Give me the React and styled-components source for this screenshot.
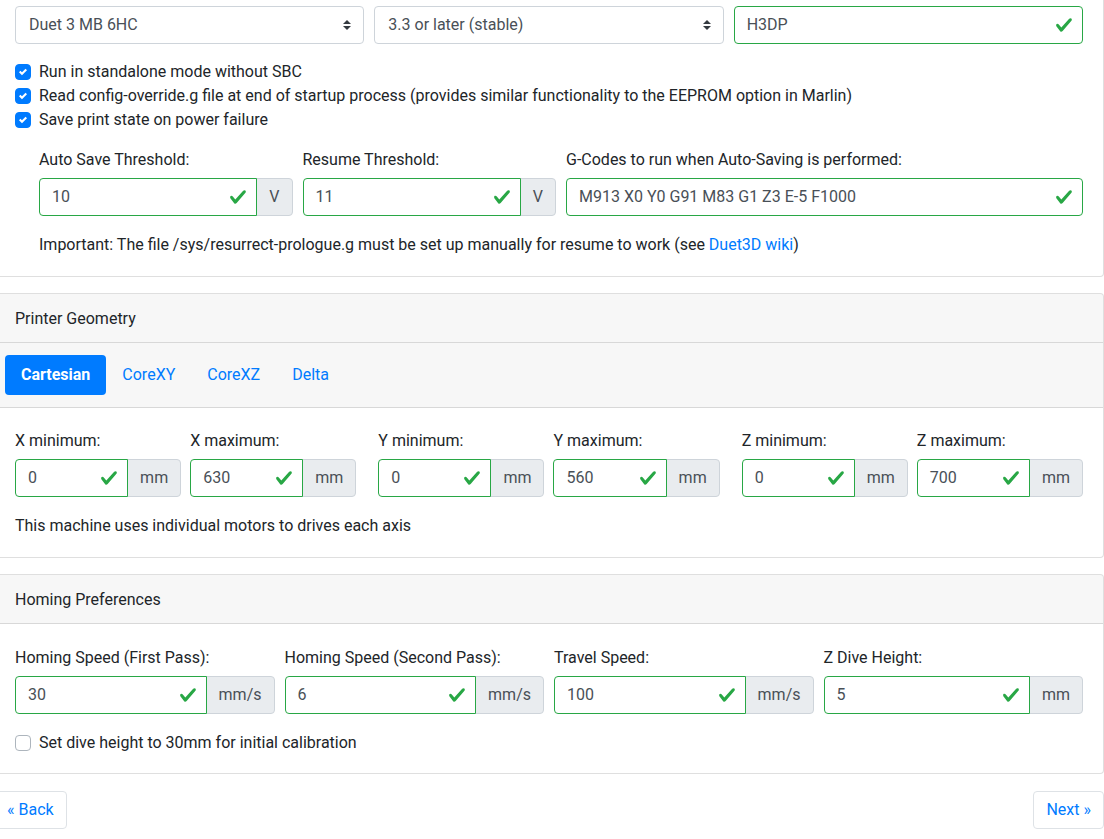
import React from "react";
import styled, { createGlobalStyle } from "styled-components";

const GlobalStyle = createGlobalStyle`
  html, body { margin: 0; padding: 0; background: #fff; }
  body {
    font-family: "Segoe UI", Roboto, "Noto Sans", sans-serif;
    font-size: 16px;
    line-height: 1.5;
    color: #212529;
    overflow: hidden;
  }
  * { box-sizing: border-box; }
`;

const Page = styled.div`
  width: 1110px;
  margin: -17px 0 0 -6px;
`;

const Card = styled.section`
  background: #fff;
  border: 1px solid rgba(0, 0, 0, 0.125);
  border-radius: 4px;
  margin-bottom: 16px;
  overflow: hidden;
`;

const CardHeader = styled.div`
  padding: ${(p) => (p.$tabs ? "12px 20px" : "13px 20px 11px")};
  background: rgba(0, 0, 0, 0.03);
  border-bottom: 1px solid rgba(0, 0, 0, 0.125);
`;

const CardBody = styled.div`
  padding: ${(p) => p.$pt ?? 22}px 20px ${(p) => p.$pb ?? 18}px;
`;

const FormRow = styled.div`
  display: flex;
  margin: 0 -5px;
`;

const Col = styled.div`
  flex: 0 0 ${(p) => (p.$span / 12) * 100}%;
  max-width: ${(p) => (p.$span / 12) * 100}%;
  padding: 0 5px;
`;

const Group = styled.div`
  margin-bottom: ${(p) => (p.$space ? `${p.$space}px` : "16px")};
`;

const Label = styled.div`
  margin-bottom: 6px;
`;

const Select = styled.div`
  height: 38px;
  display: flex;
  align-items: center;
  justify-content: space-between;
  padding: 6px 12px 6px 13px;
  border: 1px solid #ced4da;
  border-radius: 4px;
  color: #495057;
  background: #fff;
`;

const InputGroup = styled.div`
  display: flex;
  align-items: stretch;
`;

const Field = styled.div`
  position: relative;
  z-index: 1;
  flex: 1 1 auto;
  min-width: 0;
  height: 38px;
  display: flex;
  align-items: center;
  padding: 6px 9px 6px 12px;
  border: 1px solid #28a745;
  border-radius: ${(p) => (p.$append ? "4px 0 0 4px" : "4px")};
  color: #495057;
  background: #fff;
`;

const FieldText = styled.span`
  flex: 1 1 auto;
  white-space: nowrap;
`;

const Append = styled.div`
  display: flex;
  align-items: center;
  margin-left: -1px;
  padding: 6px 12px;
  background: #e9ecef;
  border: 1px solid #ced4da;
  border-radius: 0 4px 4px 0;
  color: #495057;
  white-space: nowrap;
`;

const CheckRow = styled.label`
  display: flex;
  align-items: flex-start;
  gap: 8px;
  min-height: 24px;
`;

const Box = styled.span`
  flex: 0 0 16px;
  width: 16px;
  height: 16px;
  margin-top: 4px;
  border-radius: 4px;
  border: 1px solid ${(p) => (p.$checked ? "#007bff" : "#adb5bd")};
  background: ${(p) => (p.$checked ? "#007bff" : "#fff")};
  display: flex;
  align-items: center;
  justify-content: center;
`;

const CheckList = styled.div`
  margin-bottom: 16px;
`;

const Indented = styled.div`
  padding-left: 24px;
`;

const Text = styled.p`
  margin: 0;
`;

const Link = styled.a`
  color: #007bff;
  text-decoration: none;
`;

const Pills = styled.nav`
  display: flex;
  margin: 0 -10px;
`;

const Pill = styled.a`
  display: block;
  padding: 8px 16px;
  border-radius: 4px;
  color: ${(p) => (p.$active ? "#fff" : "#007bff")};
  background: ${(p) => (p.$active ? "#007bff" : "transparent")};
  font-weight: ${(p) => (p.$active ? 700 : 400)};
  text-decoration: none;
`;

const AxisGrid = styled.div`
  display: grid;
  grid-template-columns: repeat(3, 1fr);
  column-gap: 22px;
  margin-bottom: 17px;
`;

const AxisPair = styled.div`
  display: grid;
  grid-template-columns: 1fr 1fr;
  column-gap: 9px;
`;

const Footer = styled.div`
  display: flex;
  justify-content: space-between;
  padding-top: 1px;
`;

const NavButton = styled.button`
  font: inherit;
  height: 38px;
  padding: 6px 12px;
  border: 1px solid #dee2e6;
  border-radius: 4px;
  background: #fff;
  color: #007bff;
  cursor: pointer;
`;

const ValidIcon = () => (
  <svg width="18" height="18" viewBox="0 0 8 8" aria-hidden="true">
    <path
      fill="#28a745"
      d="M2.3 6.73L.6 4.53c-.4-1.04.46-1.4 1.1-.8l1.1 1.4 3.4-3.8c.6-.63 1.6-.27 1.2.7l-4 4.6c-.43.5-.8.4-1.1.1z"
    />
  </svg>
);

const SelectArrows = () => (
  <svg width="8" height="10" viewBox="0 0 4 5" aria-hidden="true">
    <path fill="#343a40" d="M2 0L0 2h4zm0 5L0 3h4z" />
  </svg>
);

const Tick = () => (
  <svg width="8" height="8" viewBox="0 0 8 8" aria-hidden="true">
    <path fill="#fff" d="M6.564.75l-3.59 3.612-1.538-1.55L0 4.26l2.974 2.99L8 2.193z" />
  </svg>
);

const ValidInput = ({ value, unit }) => (
  <InputGroup>
    <Field $append={!!unit}>
      <FieldText>{value}</FieldText>
      <ValidIcon />
    </Field>
    {unit && <Append>{unit}</Append>}
  </InputGroup>
);

const Checkbox = ({ checked, children }) => (
  <CheckRow>
    <Box $checked={checked}>{checked && <Tick />}</Box>
    <span>{children}</span>
  </CheckRow>
);

const LabeledInput = ({ label, value, unit }) => (
  <div>
    <Label>{label}</Label>
    <ValidInput value={value} unit={unit} />
  </div>
);

const axes = [
  [
    ["X minimum:", "0"],
    ["X maximum:", "630"],
  ],
  [
    ["Y minimum:", "0"],
    ["Y maximum:", "560"],
  ],
  [
    ["Z minimum:", "0"],
    ["Z maximum:", "700"],
  ],
];

const homing = [
  ["Homing Speed (First Pass):", "30", "mm/s"],
  ["Homing Speed (Second Pass):", "6", "mm/s"],
  ["Travel Speed:", "100", "mm/s"],
  ["Z Dive Height:", "5", "mm"],
];

export default function App() {
  return (
    <>
      <GlobalStyle />
      <Page>
        <Card>
          <CardBody $pb={19}>
            <Group>
              <FormRow>
                <Col $span={4}>
                  <Select>
                    <span>Duet 3 MB 6HC</span>
                    <SelectArrows />
                  </Select>
                </Col>
                <Col $span={4}>
                  <Select>
                    <span>3.3 or later (stable)</span>
                    <SelectArrows />
                  </Select>
                </Col>
                <Col $span={4}>
                  <ValidInput value="H3DP" />
                </Col>
              </FormRow>
            </Group>

            <CheckList>
              <Checkbox checked>Run in standalone mode without SBC</Checkbox>
              <Checkbox checked>
                Read config-override.g file at end of startup process (provides similar functionality to
                the EEPROM option in Marlin)
              </Checkbox>
              <Checkbox checked>Save print state on power failure</Checkbox>
            </CheckList>

            <Indented>
              <Group $space={17}>
                <FormRow>
                  <Col $span={3}>
                    <LabeledInput label="Auto Save Threshold:" value="10" unit="V" />
                  </Col>
                  <Col $span={3}>
                    <LabeledInput label="Resume Threshold:" value="11" unit="V" />
                  </Col>
                  <Col $span={6}>
                    <LabeledInput
                      label="G-Codes to run when Auto-Saving is performed:"
                      value="M913 X0 Y0 G91 M83 G1 Z3 E-5 F1000"
                    />
                  </Col>
                </FormRow>
              </Group>
              <Text>
                Important: The file /sys/resurrect-prologue.g must be set up manually for resume to work
                (see <Link href="#">Duet3D wiki</Link>)
              </Text>
            </Indented>
          </CardBody>
        </Card>

        <Card>
          <CardHeader>Printer Geometry</CardHeader>
          <CardHeader $tabs>
            <Pills>
              <Pill $active>Cartesian</Pill>
              <Pill>CoreXY</Pill>
              <Pill>CoreXZ</Pill>
              <Pill>Delta</Pill>
            </Pills>
          </CardHeader>
          <CardBody $pt={21} $pb={19}>
            <AxisGrid>
              {axes.map((pair, i) => (
                <AxisPair key={i}>
                  {pair.map(([label, value]) => (
                    <LabeledInput key={label} label={label} value={value} unit="mm" />
                  ))}
                </AxisPair>
              ))}
            </AxisGrid>
            <Text>This machine uses individual motors to drives each axis</Text>
          </CardBody>
        </Card>

        <Card>
          <CardHeader>Homing Preferences</CardHeader>
          <CardBody>
            <Group $space={17}>
              <FormRow>
                {homing.map(([label, value, unit]) => (
                  <Col $span={3} key={label}>
                    <LabeledInput label={label} value={value} unit={unit} />
                  </Col>
                ))}
              </FormRow>
            </Group>
            <Checkbox>Set dive height to 30mm for initial calibration</Checkbox>
          </CardBody>
        </Card>

        <Footer>
          <NavButton>« Back</NavButton>
          <NavButton>Next »</NavButton>
        </Footer>
      </Page>
    </>
  );
}
